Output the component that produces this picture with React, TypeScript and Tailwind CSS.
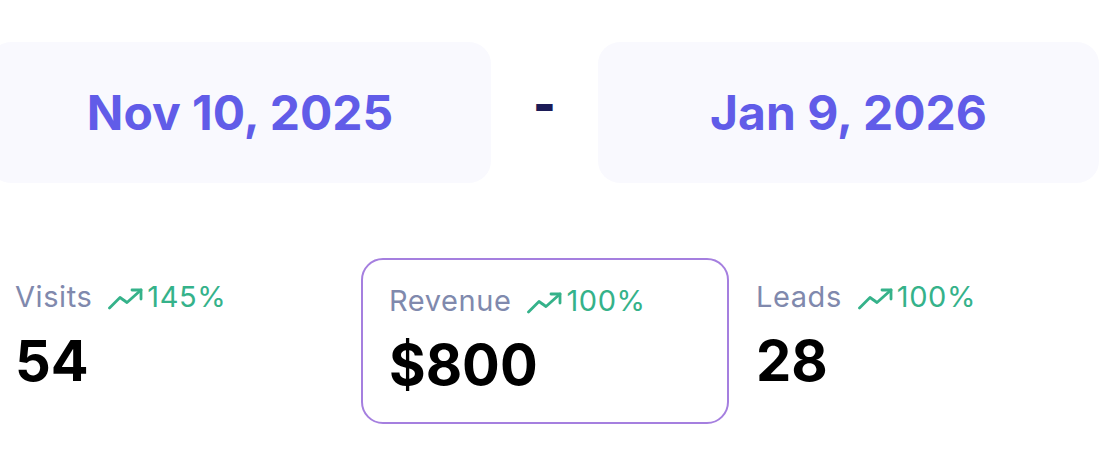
import React from "react";

interface StatProps {
  label: string;
  change: string;
  value: string;
}

function TrendIcon() {
  return (
    <svg width="36" height="22" viewBox="0 0 36 22" fill="none" stroke="currentColor" strokeWidth={2.8} strokeLinecap="round" strokeLinejoin="round">
      <path d="M1.5 20 L12 9.5 L19 14.5 L33 2" />
      <path d="M24 2 H33 V11" />
    </svg>
  );
}

function StatBody({ label, change, value }: StatProps) {
  return (
    <div className="flex flex-col">
      <div className="flex items-center gap-[16px] text-[29px] leading-[32px] tracking-[0.02em]">
        <span className="text-[#8089ad]">{label}</span>
        <span className="flex items-center gap-[3px] text-[#35b28a]">
          <span className="pt-[4px]">
            <TrendIcon />
          </span>
          {change}
        </span>
      </div>
      <div className="mt-5 text-[56px] leading-none font-bold text-black">{value}</div>
    </div>
  );
}

export default function App() {
  return (
    <div className="w-[1112px] h-[460px] bg-white overflow-hidden pt-[42px] font-['Inter',sans-serif]">
      {/* Date range */}
      <div className="flex items-center">
        <div className="-ml-[11px] w-[502px] h-[141px] rounded-[22px] bg-[#f9f9fe] flex items-center justify-center">
          <span className="text-[48px] font-bold text-[#615ce8]">Nov 10, 2025</span>
        </div>
        <div className="w-[107px] flex justify-center pb-[18px]">
          <span className="text-[48px] font-black text-[#1c1b57] leading-none">-</span>
        </div>
        <div className="w-[501px] h-[141px] rounded-[22px] bg-[#f9f9fe] flex items-center justify-center">
          <span className="text-[48px] font-bold text-[#615ce8]">Jan 9, 2026</span>
        </div>
      </div>

      {/* Stats */}
      <div className="flex items-start mt-[75px]">
        <div className="w-[361px] pl-[15px] pt-[23px]">
          <StatBody label="Visits" change="145%" value="54" />
        </div>
        <div className="w-[368px] h-[166px] rounded-[22px] border-2 border-[#a57fdf] pl-[26px] pt-[25px]">
          <StatBody label="Revenue" change="100%" value="$800" />
        </div>
        <div className="pl-[27px] pt-[23px]">
          <StatBody label="Leads" change="100%" value="28" />
        </div>
      </div>
    </div>
  );
}
